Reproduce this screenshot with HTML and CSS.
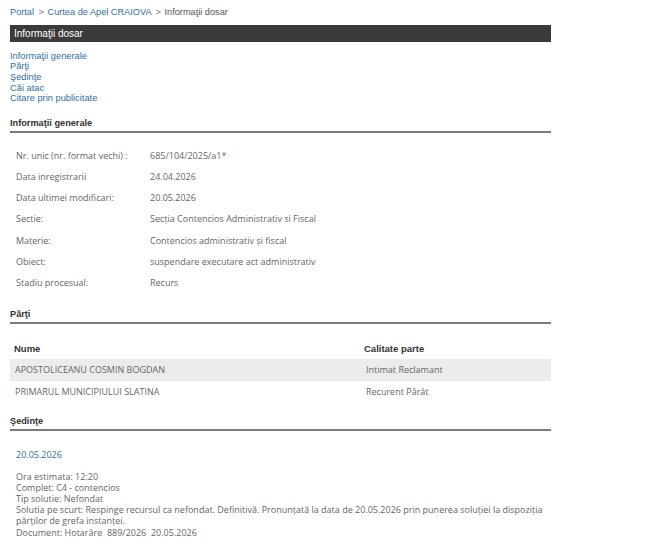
FILE: index.html
```html
<!DOCTYPE html>
<html lang="ro">
<head>
<meta charset="utf-8">
<title>Informaţii dosar</title>
<link rel="stylesheet" href="styles.css">
</head>
<body>
<div class="page">
  <div class="crumbs"><a href="#">Portal</a> <span class="sep">&gt;</span> <a href="#">Curtea de Apel CRAIOVA</a> <span class="sep">&gt;</span> <span class="cur">Informaţii dosar</span></div>
  <div class="titlebar">Informaţii dosar</div>
  <ul class="nav">
    <li><a href="#">Informaţii generale</a></li>
    <li><a href="#">Părţi</a></li>
    <li><a href="#">Şedinţe</a></li>
    <li><a href="#">Căi atac</a></li>
    <li><a href="#">Citare prin publicitate</a></li>
  </ul>

  <h2 class="sect s1">Informaţii generale</h2>
  <div class="info">
    <div class="row"><span class="lbl">Nr. unic (nr. format vechi) :</span><span class="val">685/104/2025/a1*</span></div>
    <div class="row"><span class="lbl">Data inregistrarii</span><span class="val">24.04.2026</span></div>
    <div class="row"><span class="lbl">Data ultimei modificari:</span><span class="val">20.05.2026</span></div>
    <div class="row"><span class="lbl">Sectie:</span><span class="val">Secţia Contencios Administrativ si Fiscal</span></div>
    <div class="row"><span class="lbl">Materie:</span><span class="val">Contencios administrativ și fiscal</span></div>
    <div class="row"><span class="lbl">Obiect:</span><span class="val">suspendare executare act administrativ</span></div>
    <div class="row"><span class="lbl">Stadiu procesual:</span><span class="val">Recurs</span></div>
  </div>

  <h2 class="sect s2">Părţi</h2>
  <div class="parti">
    <div class="prow head"><span class="c1">Nume</span><span class="c2">Calitate parte</span></div>
    <div class="prow alt"><span class="c1">APOSTOLICEANU COSMIN BOGDAN</span><span class="c2">Intimat Reclamant</span></div>
    <div class="prow"><span class="c1">PRIMARUL MUNICIPIULUI SLATINA</span><span class="c2">Recurent Pârât</span></div>
  </div>

  <h2 class="sect s3">Şedinţe</h2>
  <div class="sedinta">
    <div class="date">20.05.2026</div>
    <p class="lines">Ora estimata: 12:20<br>Complet: C4 - contencios<br>Tip solutie: Nefondat<br>Solutia pe scurt: Respinge recursul ca nefondat. Definitivă. Pronunţată la data de 20.05.2026 prin punerea soluţiei la dispoziţia părţilor de grefa instanţei.<br>Document: Hotarâre &nbsp;889/2026 &nbsp;20.05.2026</p>
  </div>
</div>
</body>
</html>
```
FILE: styles.css
```css
* { box-sizing: border-box; }
body { margin: 0; background: #fff; }
.page { width: 551px; padding-left: 10px; font-family: "Liberation Sans", Arial, sans-serif; }
a { color: #2f6fa8; text-decoration: none; }

.crumbs { font-size: 9.2px; line-height: 12px; padding-top: 6px; height: 25px; color: #666; }
.crumbs .sep { color: #777; margin: 0 1px 0 2px; }
.crumbs .cur { color: #555; }

.titlebar { background: #3b3b3b; color: #fff; font-size: 10px; height: 17px; line-height: 17px; padding-left: 4px; }

.nav { list-style: none; margin: 0; padding: 8.5px 0 0 0; font-size: 9.3px; line-height: 10.7px; }

.sect { margin: 0; font-size: 9.2px; font-weight: bold; color: #333; border-bottom: 2px solid #7a7a7a; line-height: 12px; padding-bottom: 2px; }
.s1 { margin-top: 12.5px; }
.s2 { margin-top: 9px; }
.s3 { margin-top: 12.5px; }

.info { padding: 17px 0 0 6px; font-family: "Open Sans", "Noto Sans", sans-serif; font-size: 9px; color: #666; }
.row { display: flex; height: 21.3px; line-height: 12px; }
.lbl { width: 134px; }
.val { color: #666; }

.parti { padding-top: 14px; font-family: "Open Sans", "Noto Sans", sans-serif; font-size: 9px; color: #666; }
.prow { display: flex; height: 21.5px; align-items: center; padding-left: 5px; }
.prow.head { font-family: "Liberation Sans", Arial, sans-serif; font-weight: bold; font-size: 9.5px; color: #333; padding-left: 4px; }
.prow.alt { background: #ececec; }
.c1 { width: 351px; }
.prow.head .c1 { width: 350px; }

.sedinta { padding: 18px 0 0 6px; font-family: "Open Sans", "Noto Sans", sans-serif; font-size: 9px; color: #666; }
.date { color: #2f6fa8; font-size: 9px; line-height: 12px; margin-bottom: 10px; }
.lines { margin: 0; line-height: 11.2px; }
```
